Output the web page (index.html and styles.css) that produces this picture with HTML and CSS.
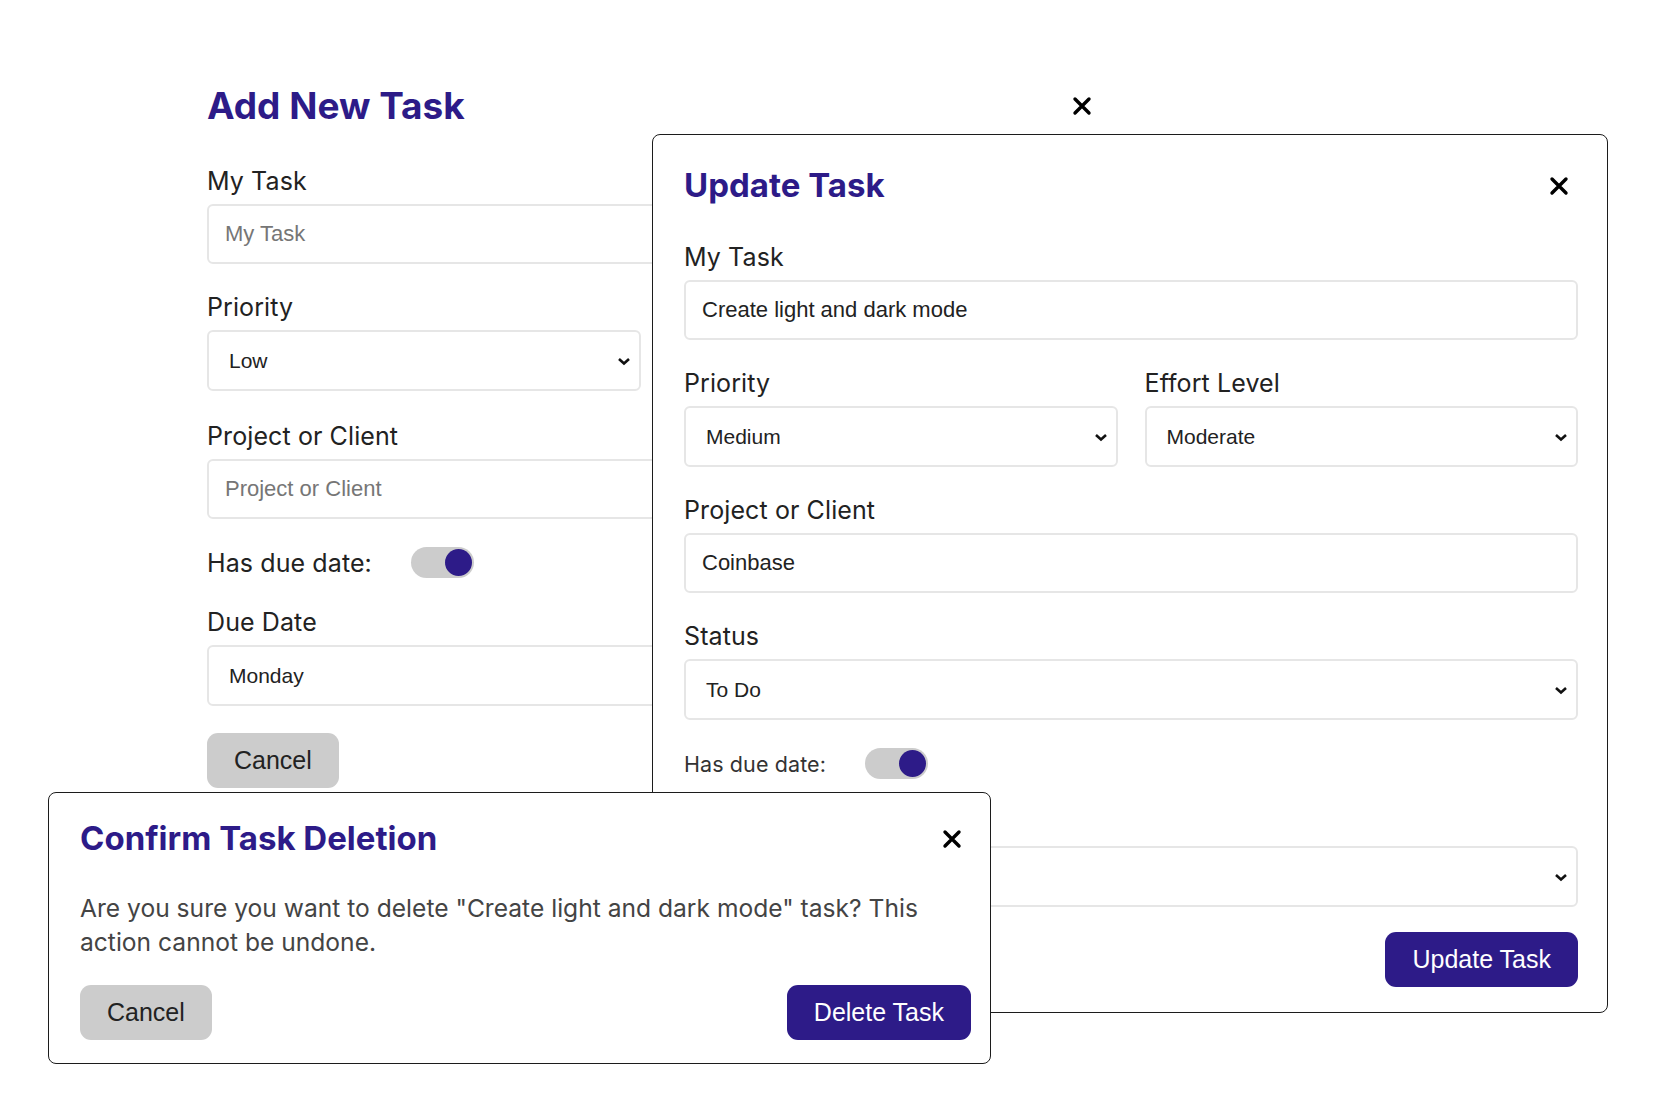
FILE: index.html
```html
<!DOCTYPE html>
<html lang="en">
<head>
<meta charset="utf-8">
<title>Tasks</title>
<link rel="stylesheet" href="styles.css">
</head>
<body>
<div class="stage">

  <section class="add-panel">
    <div class="panel-head add-head">
      <h1 class="title title-add">Add New Task</h1>
      <button class="close" aria-label="Close"><svg width="20" height="20" viewBox="0 0 20 20"><path d="M3 3L17 17M17 3L3 17" stroke="#000" stroke-width="3.4" stroke-linecap="round"/></svg></button>
    </div>
    <div class="field">
      <label class="label">My Task</label>
      <input class="input" placeholder="My Task">
    </div>
    <div class="row add-row">
      <div class="field">
        <label class="label">Priority</label>
        <div class="select"><span>Low</span><svg width="14" height="10" viewBox="0 0 14 10"><path d="M2 3l5 4.5 5-4.5" fill="none" stroke="#111" stroke-width="2.6"/></svg></div>
      </div>
      <div class="field"></div>
    </div>
    <div class="field">
      <label class="label">Project or Client</label>
      <input class="input" placeholder="Project or Client">
    </div>
    <div class="toggle-row">
      <span class="toggle-label">Has due date:</span>
      <span class="toggle"><span class="knob"></span></span>
    </div>
    <div class="field field-last">
      <label class="label">Due Date</label>
      <div class="select"><span>Monday</span><svg width="14" height="10" viewBox="0 0 14 10"><path d="M2 3l5 4.5 5-4.5" fill="none" stroke="#111" stroke-width="2.6"/></svg></div>
    </div>
    <div class="actions add-actions">
      <button class="btn btn-grey">Cancel</button>
    </div>
  </section>

  <section class="update-panel">
    <div class="panel-head update-head">
      <h2 class="title title-update">Update Task</h2>
      <button class="close" aria-label="Close"><svg width="20" height="20" viewBox="0 0 20 20"><path d="M3 3L17 17M17 3L3 17" stroke="#000" stroke-width="3.4" stroke-linecap="round"/></svg></button>
    </div>
    <div class="field">
      <label class="label">My Task</label>
      <input class="input" value="Create light and dark mode">
    </div>
    <div class="row">
      <div class="field">
        <label class="label">Priority</label>
        <div class="select"><span>Medium</span><svg width="14" height="10" viewBox="0 0 14 10"><path d="M2 3l5 4.5 5-4.5" fill="none" stroke="#111" stroke-width="2.6"/></svg></div>
      </div>
      <div class="field">
        <label class="label">Effort Level</label>
        <div class="select"><span>Moderate</span><svg width="14" height="10" viewBox="0 0 14 10"><path d="M2 3l5 4.5 5-4.5" fill="none" stroke="#111" stroke-width="2.6"/></svg></div>
      </div>
    </div>
    <div class="field">
      <label class="label">Project or Client</label>
      <input class="input" value="Coinbase">
    </div>
    <div class="field">
      <label class="label">Status</label>
      <div class="select"><span>To Do</span><svg width="14" height="10" viewBox="0 0 14 10"><path d="M2 3l5 4.5 5-4.5" fill="none" stroke="#111" stroke-width="2.6"/></svg></div>
    </div>
    <div class="toggle-row">
      <span class="toggle-label toggle-label-sm">Has due date:</span>
      <span class="toggle"><span class="knob"></span></span>
    </div>
    <div class="field field-last">
      <div class="label-space"></div>
      <div class="select select-end"><svg width="14" height="10" viewBox="0 0 14 10"><path d="M2 3l5 4.5 5-4.5" fill="none" stroke="#111" stroke-width="2.6"/></svg></div>
    </div>
    <div class="actions actions-end update-actions">
      <button class="btn btn-primary">Update Task</button>
    </div>
  </section>

  <section class="confirm-panel">
    <div class="panel-head">
      <h2 class="title title-confirm">Confirm Task Deletion</h2>
      <button class="close close-confirm" aria-label="Close"><svg width="20" height="20" viewBox="0 0 20 20"><path d="M3 3L17 17M17 3L3 17" stroke="#000" stroke-width="3.4" stroke-linecap="round"/></svg></button>
    </div>
    <p class="confirm-text">Are you sure you want to delete "Create light and dark mode" task? This action cannot be undone.</p>
    <div class="actions confirm-actions">
      <button class="btn btn-grey">Cancel</button>
      <button class="btn btn-primary">Delete Task</button>
    </div>
  </section>

</div>
</body>
</html>
```

FILE: styles.css
```css
* { box-sizing: border-box; }

body {
  margin: 0;
  background: #ffffff;
  font-family: Inter, "Noto Sans", sans-serif;
  color: #222222;
}

.stage {
  position: relative;
  width: 1656px;
  height: 1119px;
  overflow: hidden;
}

/* shared */
.panel-head {
  display: flex;
  justify-content: space-between;
  align-items: center;
}

.title {
  margin: 0;
  font-weight: 700;
  color: #2d1b88;
}

.close {
  display: block;
  width: 20px;
  height: 20px;
  padding: 0;
  margin: 0 9px 0 0;
  border: 0;
  background: none;
}

.close svg { display: block; }

.field { margin-bottom: 28px; }
.field-last { margin-bottom: 0; }

.label {
  display: block;
  font-size: 25px;
  line-height: 30px;
  letter-spacing: 0.1px;
  margin-bottom: 8px;
  color: #222222;
}

.label-space {
  height: 30px;
  margin-bottom: 8px;
}

.input {
  display: block;
  width: 100%;
  height: 60px;
  margin: 0;
  border: 2px solid #e6e6e6;
  border-radius: 6px;
  padding: 0 16px;
  font-family: "Liberation Sans", Arial, sans-serif;
  font-size: 22px;
  color: #222222;
  background: #ffffff;
  outline: none;
}

.input::placeholder { color: #767676; }

.select {
  display: flex;
  align-items: center;
  justify-content: space-between;
  height: 61px;
  border: 2px solid #e6e6e6;
  border-radius: 6px;
  padding: 0 8px 0 20px;
  font-family: "Liberation Sans", Arial, sans-serif;
  font-size: 21px;
  color: #222222;
  background: #ffffff;
}

.select-end { justify-content: flex-end; }

.select svg { display: block; }

.row {
  display: grid;
  grid-template-columns: 1fr 1fr;
  column-gap: 27px;
}

.add-row .field { margin-bottom: 30px; }

.toggle-row {
  display: flex;
  align-items: center;
  gap: 39px;
  margin-bottom: 29px;
}

.toggle-label {
  font-size: 25px;
  line-height: 30px;
  letter-spacing: 0.1px;
  color: #222222;
}

.toggle-label-sm {
  font-size: 21.5px;
  color: #333333;
}

.toggle {
  display: flex;
  align-items: center;
  justify-content: flex-end;
  width: 63px;
  height: 31px;
  padding-right: 2px;
  border-radius: 16px;
  background: #cccccc;
}

.knob {
  width: 27px;
  height: 27px;
  border-radius: 50%;
  background: #2d1b88;
}

.actions {
  display: flex;
  justify-content: space-between;
  align-items: center;
}

.actions-end { justify-content: flex-end; }

.btn {
  height: 55px;
  padding: 0 27px;
  border: 0;
  border-radius: 11px;
  font-family: "Liberation Sans", Arial, sans-serif;
  font-size: 25px;
}

.btn-grey {
  background: #cccccc;
  color: #222222;
}

.btn-primary {
  background: #2d1b88;
  color: #ffffff;
}

/* add panel (background layer) */
.add-panel {
  width: 894px;
  margin-left: 207px;
  padding-top: 84px;
}

.add-head { margin-bottom: 38px; }

.title-add {
  font-size: 37px;
  line-height: 44px;
}

.add-actions { margin-top: 27px; }

/* update panel */
.update-panel {
  position: absolute;
  left: 652px;
  top: 134px;
  width: 956px;
  padding: 30px 29px 25px 31px;
  border: 1px solid #1c1c1c;
  border-radius: 8px;
  background: #ffffff;
}

.update-head { margin-bottom: 36px; }

.title-update {
  font-size: 33px;
  line-height: 41px;
}

.update-actions { margin-top: 25px; }

/* confirm panel */
.confirm-panel {
  position: absolute;
  left: 48px;
  top: 792px;
  width: 943px;
  padding: 26px 28px 23px 31px;
  border: 1px solid #1c1c1c;
  border-radius: 8px;
  background: #ffffff;
}

.title-confirm {
  font-size: 33px;
  line-height: 39px;
}

.close-confirm { margin-right: 0; }

.confirm-text {
  margin: 33px 0 0;
  font-size: 24.6px;
  line-height: 34px;
  color: #444444;
}

.confirm-actions {
  margin-top: 26px;
  margin-right: -9px;
}
```
